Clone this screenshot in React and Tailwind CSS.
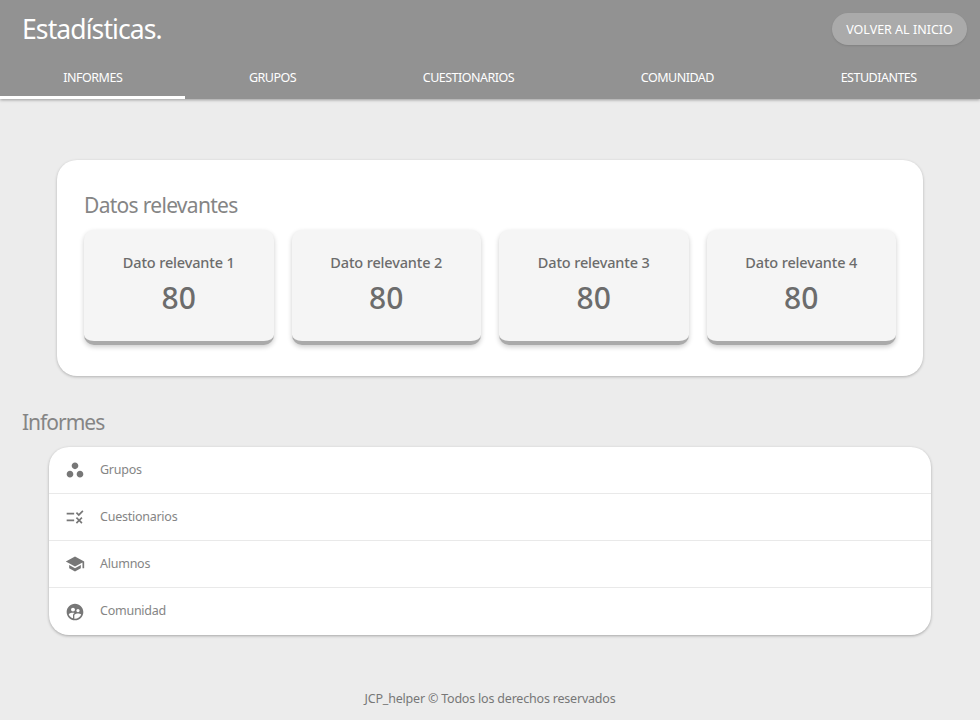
import { MdWorkspaces, MdRule, MdSchool, MdSupervisedUserCircle } from 'react-icons/md';

const tabs = ['INFORMES', 'GRUPOS', 'CUESTIONARIOS', 'COMUNIDAD', 'ESTUDIANTES'];
const stats = [
  { label: 'Dato relevante 1', value: 80 },
  { label: 'Dato relevante 2', value: 80 },
  { label: 'Dato relevante 3', value: 80 },
  { label: 'Dato relevante 4', value: 80 },
];
const reports = [
  { label: 'Grupos', Icon: MdWorkspaces },
  { label: 'Cuestionarios', Icon: MdRule },
  { label: 'Alumnos', Icon: MdSchool },
  { label: 'Comunidad', Icon: MdSupervisedUserCircle },
];

function Header() {
  return (
    <header className="flex h-[99px] flex-col bg-[#929292] text-white shadow-[0_1px_3px_rgba(0,0,0,0.35)]">
      <div className="flex h-[58px] items-center justify-between pr-[13px] pl-[22px]">
        <h1 className="text-[26.5px] leading-9 tracking-[-0.9px]">Estadísticas.</h1>
        <button className="h-8 w-[135px] rounded-full bg-[#aaaaaa] pt-[2px] text-[12.5px] tracking-[0px] whitespace-nowrap shadow-[0_1px_2px_rgba(0,0,0,0.12)]">
          VOLVER AL INICIO
        </button>
      </div>
      <nav className="flex h-[38px] items-center justify-around pt-[2px]">
        {tabs.map((tab) => (
          <span key={tab} className="text-[12.5px] tracking-[-0.5px]">{tab}</span>
        ))}
      </nav>
      <div className="h-[3px] w-[185px] bg-white" />
    </header>
  );
}

function StatCard({ label, value }) {
  return (
    <div className="flex h-[115px] flex-1 flex-col items-center rounded-[10px] border-b-4 border-[#aaaaaa] bg-[#f5f5f5] pt-[21px] text-[#6c6c6c] shadow-[0_2px_5px_rgba(0,0,0,0.2)]">
      <p className="text-[14.5px] leading-[22px] font-medium tracking-[-0.15px]">{label}</p>
      <p className="mt-[5px] text-[30px] leading-10 font-medium">{value}</p>
    </div>
  );
}

export default function App() {
  return (
    <div className="flex h-[720px] flex-col bg-[#ececec] font-['Noto_Sans','Open_Sans',sans-serif]">
      <Header />
      <main>
        <section className="mx-[57px] mt-[61px] h-[216px] rounded-[20px] bg-white px-[27px] pt-[29px] shadow-[0_1px_3px_rgba(0,0,0,0.25)]">
          <h2 className="text-[21px] leading-8 tracking-[-0.7px] text-[#858585]">Datos relevantes</h2>
          <div className="mt-[9px] flex gap-[18px]">
            {stats.map((stat) => <StatCard key={stat.label} {...stat} />)}
          </div>
        </section>
        <h2 className="mt-[30px] ml-[22px] text-[21px] leading-8 tracking-[-1px] text-[#858585]">Informes</h2>
        <ul className="mx-[49px] mt-[9px] h-[188px] divide-y divide-[#e9e9e9] rounded-[20px] bg-white shadow-[0_1px_3px_rgba(0,0,0,0.3)]">
          {reports.map(({ label, Icon }) => (
            <li key={label} className="flex h-[47px] items-center pl-4">
              <Icon className="h-5 w-5 text-[#777777]" />
              <span className="ml-[15px] text-[12.5px] tracking-[-0.25px] text-[#858585]">{label}</span>
            </li>
          ))}
        </ul>
      </main>
      <footer className="mt-[53px] text-center text-[12.5px] leading-[22px] tracking-[-0.2px] text-[#777777]">
        JCP_helper © Todos los derechos reservados
      </footer>
    </div>
  );
}
